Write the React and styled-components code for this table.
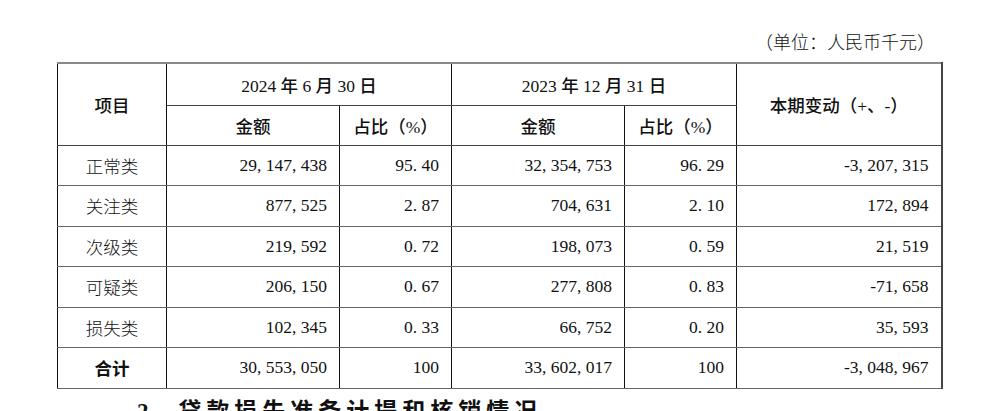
import React from "react";
import styled, { createGlobalStyle } from "styled-components";

const GlobalStyle = createGlobalStyle`
  html, body {
    margin: 0;
    padding: 0;
    background: #ffffff;
  }
  body {
    font-family: "Liberation Serif", "Noto Sans CJK SC", serif;
    color: #111;
    overflow: hidden;
  }
`;

const rows = [
  ["正常类", "29,147,438", "95.40", "32,354,753", "96.29", "-3,207,315"],
  ["关注类", "877,525", "2.87", "704,631", "2.10", "172,894"],
  ["次级类", "219,592", "0.72", "198,073", "0.59", "21,519"],
  ["可疑类", "206,150", "0.67", "277,808", "0.83", "-71,658"],
  ["损失类", "102,345", "0.33", "66,752", "0.20", "35,593"],
];

const total = ["合计", "30,553,050", "100", "33,602,017", "100", "-3,048,967"];

const spaced = (s) => s.replace(/([,.])/g, "$1\u2005");

const Page = styled.div`
  width: 884px;
  padding: 31px 0 0 57px;
`;

const Unit = styled.div`
  height: 24px;
  line-height: 24px;
  padding-right: 6px;
  margin-bottom: 7px;
  text-align: right;
  font-size: 18px;
  font-weight: 300;
`;

// full-width bracket cell, the fallback font draws these half-width
const Paren = styled.span`
  display: inline-block;
  width: 1em;
  text-align: ${(p) => p.$align || "center"};
`;

const Table = styled.table`
  width: 884px;
  table-layout: fixed;
  border-collapse: collapse;
  border-top: 2px solid #8a8a8a;
  border-right: 2px solid #444;
  border-left: 1px solid #000;
  border-bottom: 1px solid #000;
  font-size: 17.5px;
`;

const Row = styled.tr`
  height: ${(p) => p.$h || 40.5}px;
`;

const Th = styled.th`
  border-left: 1px solid #111;
  border-right: 1px solid #111;
  border-top: 1px solid #444;
  border-bottom: 1px solid #444;
  padding: 0;
  text-align: center;
  vertical-align: middle;
  font-weight: 500;
`;

const Td = styled.td`
  border-left: 1px solid #111;
  border-right: 1px solid #111;
  border-top: 1px solid #666;
  border-bottom: 1px solid #666;
  padding: 0 ${(p) => (p.$center ? 0 : 12)}px 0 0;
  text-align: ${(p) => (p.$center ? "center" : "right")};
  vertical-align: middle;
  font-weight: ${(p) => (p.$bold ? 700 : 300)};
  white-space: nowrap;
`;

const Heading = styled.div`
  margin-top: 8px;
  padding-left: 80px;
  font-size: 23px;
  font-weight: 700;
  line-height: 30px;
  letter-spacing: 5px;
  white-space: nowrap;
`;

const Num = styled.span`
  margin-right: 14px;
`;

const BodyRow = ({ cells, bold }) => (
  <Row>
    {cells.map((c, i) =>
      i === 0 ? (
        <Td key={i} $center $bold={bold}>
          {c}
        </Td>
      ) : (
        <Td key={i}>{spaced(c)}</Td>
      )
    )}
  </Row>
);

export default function App() {
  return (
    <>
      <GlobalStyle />
      <Page>
        <Unit>
          <Paren>（</Paren>单位：人民币千元<Paren $align="right">）</Paren>
        </Unit>
        <Table>
          <colgroup>
            <col style={{ width: 109 }} />
            <col style={{ width: 173 }} />
            <col style={{ width: 112 }} />
            <col style={{ width: 173 }} />
            <col style={{ width: 112 }} />
            <col style={{ width: 205 }} />
          </colgroup>
          <thead>
            <Row $h={42}>
              <Th rowSpan={2}>项目</Th>
              <Th colSpan={2}>2024 年 6 月 30 日</Th>
              <Th colSpan={2}>2023 年 12 月 31 日</Th>
              <Th rowSpan={2}>本期变动（+、-）</Th>
            </Row>
            <Row $h={40}>
              <Th>金额</Th>
              <Th>占比（%）</Th>
              <Th>金额</Th>
              <Th>占比（%）</Th>
            </Row>
          </thead>
          <tbody>
            {rows.map((r) => (
              <BodyRow key={r[0]} cells={r} />
            ))}
            <BodyRow cells={total} bold />
          </tbody>
        </Table>
        <Heading>
          <Num>2.</Num>贷款损失准备计提和核销情况
        </Heading>
      </Page>
    </>
  );
}
